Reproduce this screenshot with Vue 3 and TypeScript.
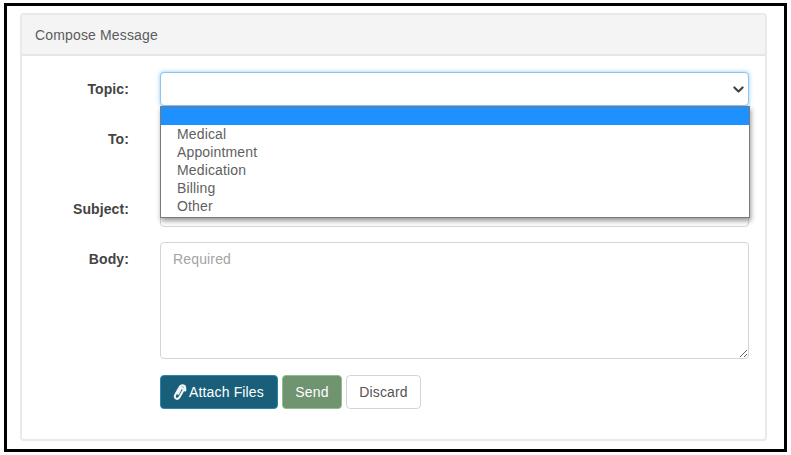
<template>
  <div class="frame">
    <section class="panel">
      <header class="panel-head">Compose Message</header>
      <form class="panel-body" @submit.prevent>
        <div class="row row-topic">
          <label class="label">Topic:</label>
          <div class="field select-wrap">
            <div class="select">
              <svg class="chevron" viewBox="0 0 16 16" width="11" height="11">
                <path d="M2 5l6 6 6-6" fill="none" stroke="#3f3f3f" stroke-width="3" stroke-linecap="round" stroke-linejoin="round" />
              </svg>
            </div>
            <ul class="menu">
              <li v-for="opt in topics" :key="opt" :class="{ active: opt === '' }">{{ opt }}</li>
            </ul>
          </div>
        </div>
        <div class="row row-to">
          <label class="label">To:</label>
          <div class="field"><div class="input to-input" /></div>
        </div>
        <div class="row row-subject">
          <label class="label">Subject:</label>
          <div class="field"><div class="input" /></div>
        </div>
        <div class="row row-body">
          <label class="label">Body:</label>
          <div class="field">
            <textarea class="textarea" placeholder="Required" />
          </div>
        </div>
        <div class="row actions">
          <span class="label" />
          <div class="buttons">
            <button type="button" class="btn attach">
              <svg class="clip" viewBox="0 0 16 16" width="16" height="16">
                <path d="M13.2 6.6V4.4c0-1.8-1.2-3-2.9-3-1.3 0-2.3.7-2.9 2L3.3 10.8c-.9 1.7-.5 3.2.8 3.8 1.3.6 2.6 0 3.5-1.6l3.6-6.6c.5-1 .3-1.9-.5-2.3-.8-.4-1.6 0-2.1.9L6.2 9.8" fill="none" stroke="#f2f6f8" stroke-width="2.1" stroke-linecap="round" stroke-linejoin="round" />
              </svg>
              Attach Files
            </button>
            <button type="button" class="btn send">Send</button>
            <button type="button" class="btn discard">Discard</button>
          </div>
        </div>
      </form>
    </section>
  </div>
</template>

<script setup lang="ts">
const topics: string[] = ['', 'Medical', 'Appointment', 'Medication', 'Billing', 'Other']
</script>

<style>
html,
body {
  margin: 0;
  background: #fff;
}
</style>

<style scoped>
.frame {
  box-sizing: border-box;
  width: 783px;
  height: 449px;
  margin: 3px 0 0 4px;
  padding: 7px 17px 0 13px;
  border: 3px solid #000;
  background: #fff;
  font-family: "Liberation Sans", Arial, sans-serif;
  font-size: 14px;
  letter-spacing: 0.15px;
  color: #555;
}

.panel {
  box-sizing: border-box;
  height: 428px;
  border: 2px solid #e9e9e9;
  border-radius: 4px;
}

.panel-head {
  height: 41px;
  line-height: 40px;
  padding-left: 13px;
  background: #f4f4f4;
  border-bottom: 2px solid #e6e6e6;
  font-size: 14px;
  color: #5c5c5c;
  box-sizing: border-box;
}

.panel-body {
  display: flex;
  flex-direction: column;
}

.row {
  display: flex;
  align-items: flex-start;
}

.row-topic {
  margin-top: 16px;
  height: 50px;
}

.row-to {
  height: 70px;
}

.row-subject {
  height: 50px;
}

.row-body {
  height: 133px;
}

.label {
  width: 107px;
  flex-shrink: 0;
  text-align: right;
  font-weight: 700;
  color: #444;
  line-height: 34px;
  letter-spacing: 0.1px;
}

.field {
  margin-left: 31px;
  width: 589px;
  box-sizing: border-box;
}

.select-wrap {
  position: relative;
}

.select {
  box-sizing: border-box;
  height: 34px;
  border: 1px solid #8cc4f2;
  border-radius: 4px;
  box-shadow: 0 0 4px rgba(102, 175, 233, 0.7);
  background: #fff;
  display: flex;
  align-items: center;
  justify-content: flex-end;
  padding-right: 4px;
}

.chevron {
  display: block;
}

.menu {
  position: absolute;
  z-index: 2;
  top: 34px;
  left: 0;
  width: 590px;
  box-sizing: border-box;
  margin: 0;
  padding: 0;
  list-style: none;
  background: #fff;
  border: 1px solid #7a7a7a;
  box-shadow: 1px 3px 5px rgba(0, 0, 0, 0.4);
  height: 112px;
  color: #5f5f5f;
  line-height: 18px;
}

.menu li {
  height: 18px;
  padding-left: 16px;
}

.menu li.active {
  height: 18px;
  background: #1e90ff;
}

.input {
  box-sizing: border-box;
  height: 35px;
  border: 1px solid #d5d5d5;
  border-radius: 4px;
  background: #fff;
}

.to-input {
  height: 34px;
}

.textarea {
  display: block;
  box-sizing: border-box;
  width: 589px;
  height: 117px;
  padding: 8px 12px;
  border: 1px solid #d5d5d5;
  border-radius: 4px;
  font: inherit;
  letter-spacing: inherit;
  color: #555;
  outline: none;
}

.textarea::placeholder {
  color: #a4a4a4;
  opacity: 1;
}

.actions {
  height: auto;
}

.buttons {
  margin-left: 31px;
  display: flex;
  gap: 4px;
}

.btn {
  box-sizing: border-box;
  height: 34px;
  border-radius: 4px;
  border: 1px solid transparent;
  font: inherit;
  letter-spacing: inherit;
  padding: 0;
  display: inline-flex;
  align-items: center;
  justify-content: center;
}

.attach {
  width: 118px;
  gap: 1px;
  padding-right: 2px;
  background: #1a5f7a;
  border-color: #2a87ab;
  color: #fff;
}

.send {
  width: 60px;
  background: #709370;
  border-color: #8ec08e;
  color: #fff;
}

.discard {
  width: 75px;
  background: #fff;
  border-color: #d5d5d5;
  color: #555;
}
</style>
